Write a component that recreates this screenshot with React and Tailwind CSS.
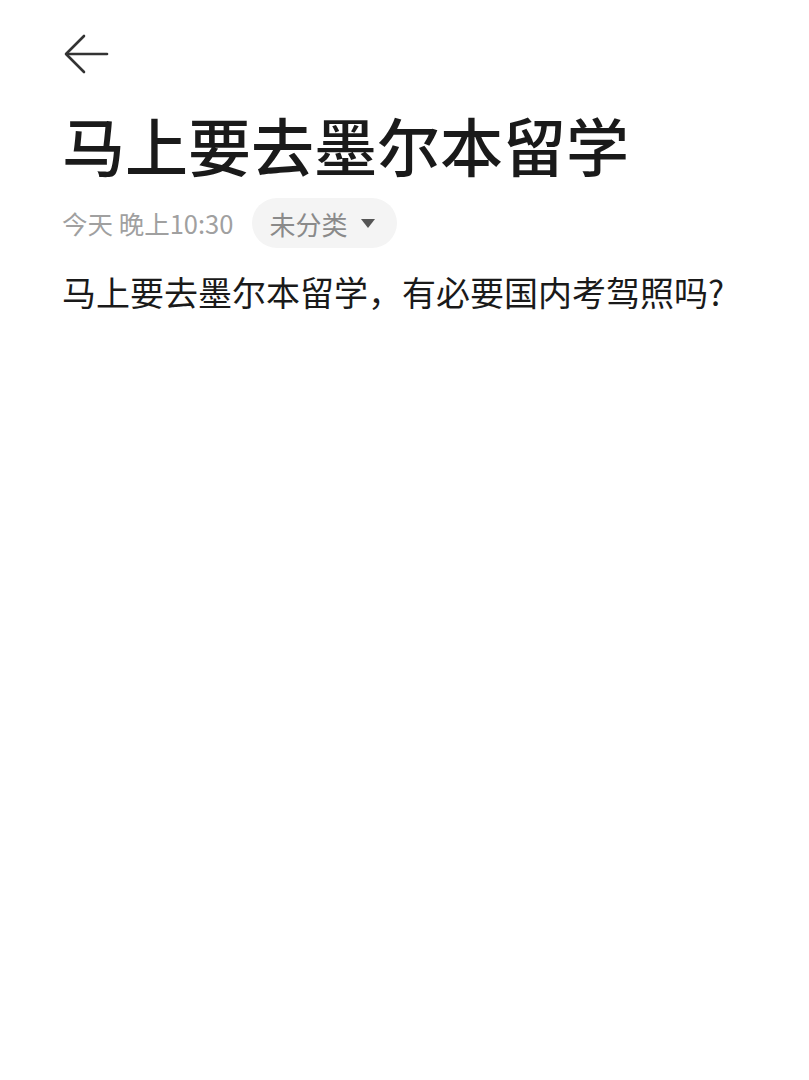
export default function App() {
  const font = { fontFamily: '"Noto Sans CJK SC", "Noto Sans", sans-serif' };
  return (
    <div className="w-[809px] h-[1080px] bg-white" style={font}>
      <div className="pl-[62px] pt-[30px]">
        <button type="button" className="block text-[#333]">
          <svg width="48" height="48" viewBox="0 0 48 48" fill="none" stroke="currentColor" strokeWidth="2.6" strokeLinecap="round" strokeLinejoin="round">
            <path d="M45 24H5" />
            <path d="M22 6L4 24l18 18" />
          </svg>
        </button>
        <h1 className="mt-[16px] text-[63px] leading-[100px] font-medium text-[#1a1a1a]">马上要去墨尔本留学</h1>
        <div className="mt-[4px] flex items-center gap-[19px]">
          <span className="text-[25.5px] text-[#a0a0a0]">今天 晚上10:30</span>
          <div className="flex items-center gap-[12px] h-[50px] pl-[17px] pr-[20px] rounded-full bg-[#f4f4f4]">
            <span className="text-[26px] text-[#8a8a8a]">未分类</span>
            <svg width="18" height="14" viewBox="0 0 18 14">
              <path d="M2 3h14l-7 9z" fill="#555" />
            </svg>
          </div>
        </div>
        <p className="mt-[19px] text-[34px] leading-[50px] text-[#1a1a1a]">马上要去墨尔本留学，有必要国内考驾照吗?</p>
      </div>
    </div>
  );
}
